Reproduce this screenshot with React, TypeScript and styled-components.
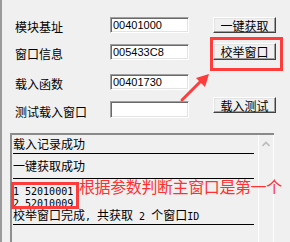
import styled, { createGlobalStyle } from 'styled-components'

const GlobalStyle = createGlobalStyle`
  html, body {
    margin: 0;
    padding: 0;
    background: #f0f0f0;
  }
  * {
    box-sizing: border-box;
  }
`

const Window = styled.div`
  position: relative;
  width: 290px;
  height: 242px;
  overflow: hidden;
  background: #f0f0f0;
  border-left: 2px solid #9a9a9a;
  font-family: "Noto Sans CJK SC", sans-serif;
  font-size: 12px;
  color: #000;
`

const TopArea = styled.div`
  display: flex;
  gap: 24px;
  padding: 17px 0 0 13px;
`

const FieldColumn = styled.div`
  display: flex;
  flex-direction: column;
`

const Field = styled.div<{ $top: number; $h?: number }>`
  display: flex;
  align-items: center;
  margin-top: ${p => p.$top}px;
  height: ${p => p.$h ?? 16}px;
`

const Label = styled.span`
  width: 95px;
  padding-top: 4px;
  line-height: 14px;
  white-space: nowrap;
`

const Input = styled.div`
  width: 79px;
  height: 100%;
  background: #fff;
  border: 1px solid;
  border-color: #a0a0a0 #fff #fff #a0a0a0;
  box-shadow: inset 1px 1px 0 #696969, inset -1px -1px 0 #e3e3e3;
  padding: 0 0 0 2px;
  font-family: "Liberation Sans", Arial, sans-serif;
  font-size: 11px;
  line-height: 14px;
`

const ButtonColumn = styled.div`
  display: flex;
  flex-direction: column;
`

const Button = styled.div<{ $top: number; $h: number }>`
  width: 63px;
  height: ${p => p.$h}px;
  margin-top: ${p => p.$top}px;
  display: flex;
  align-items: center;
  justify-content: center;
  background: #f0f0f0;
  border: 1px solid;
  border-color: #fff #404040 #404040 #fff;
  box-shadow: inset -1px -1px 0 #a0a0a0, inset 1px 1px 0 #e3e3e3;
  line-height: 12px;
  padding-top: 1px;
`

const ListPanel = styled.div`
  display: flex;
  margin: 15px 0 0 8px;
  width: 264px;
  height: 120px;
  border-top: 2px solid #8a8a8a;
  border-left: 2px solid #8f8f8f;
`

const Rows = styled.div`
  flex: 1;
  display: flex;
  flex-direction: column;
`

const Row = styled.div<{ $pt: number; $pb: number }>`
  margin: 0 4px 0 1px;
  padding: ${p => p.$pt}px 0 ${p => p.$pb}px;
  border-bottom: 1px solid #000;
  line-height: 12px;
  white-space: nowrap;
`

const Line = styled.div<{ $gap?: number }>`
  height: 12px;
  line-height: 12px;
  margin-top: ${p => p.$gap ?? 0}px;
`

const Mono = styled.span`
  font-family: "DejaVu Sans Mono", "Liberation Mono", monospace;
  font-size: 10px;
`

const Scrollbar = styled.div`
  width: 16px;
  border-left: 1px solid #fdfdfd;
  border-right: 1px solid #fdfdfd;
  display: flex;
  justify-content: center;
  padding-top: 6px;
`

const Note = styled.div`
  position: absolute;
  left: 77px;
  top: 178px;
  color: #ff3030;
  font-size: 16px;
  line-height: 16px;
  letter-spacing: -0.4px;
  white-space: nowrap;
`

const Highlight = styled.div<{ $x: number; $y: number; $w: number; $h: number }>`
  position: absolute;
  left: ${p => p.$x}px;
  top: ${p => p.$y}px;
  width: ${p => p.$w}px;
  height: ${p => p.$h}px;
  border: 3px solid #ff3c3c;
`

const ArrowSvg = styled.svg`
  position: absolute;
  left: 170px;
  top: 66px;
`

export default function App() {
  return (
    <>
      <GlobalStyle />
      <Window>
        <TopArea>
          <FieldColumn>
            <Field $top={0}>
              <Label>模块基址</Label>
              <Input>00401000</Input>
            </Field>
            <Field $top={11}>
              <Label>窗口信息</Label>
              <Input>005433C8</Input>
            </Field>
            <Field $top={14}>
              <Label>载入函数</Label>
              <Input>00401730</Input>
            </Field>
            <Field $top={11} $h={17}>
              <Label>测试载入窗口</Label>
              <Input />
            </Field>
          </FieldColumn>
          <ButtonColumn>
            <Button $top={0} $h={16}>一键获取</Button>
            <Button $top={10} $h={17}>校举窗口</Button>
            <Button $top={37} $h={16}>载入测试</Button>
          </ButtonColumn>
        </TopArea>

        <ListPanel>
          <Rows>
            <Row $pt={3} $pb={3}>载入记录成功</Row>
            <Row $pt={6} $pb={6}>一键获取成功</Row>
            <Row $pt={5} $pb={3}>
              <Line><Mono>1 52010001</Mono></Line>
              <Line><Mono>2 52010009</Mono></Line>
              <Line $gap={1}>校举窗口完成<Mono>, </Mono>共获取<Mono> 2 </Mono>个窗口<Mono>ID</Mono></Line>
            </Row>
          </Rows>
          <Scrollbar>
            <svg width="8" height="6" viewBox="0 0 8 6">
              <path d="M0.5 5 L4 1.5 L7.5 5" fill="none" stroke="#bdbdbd" strokeWidth="1.6" />
            </svg>
          </Scrollbar>
        </ListPanel>

        <Highlight $x={208} $y={37} $w={73} $h={34} />
        <Highlight $x={9} $y={182} $w={68} $h={27} />
        <Note>根据参数判断主窗口是第一个</Note>
        <ArrowSvg width="45" height="40" viewBox="0 0 45 40">
          <line x1="10" y1="34" x2="30" y2="14" stroke="#ff3b3b" strokeWidth="3" strokeLinecap="round" />
          <polygon points="37,8 24,12 33,21" fill="#ff3b3b" />
        </ArrowSvg>
      </Window>
    </>
  )
}
